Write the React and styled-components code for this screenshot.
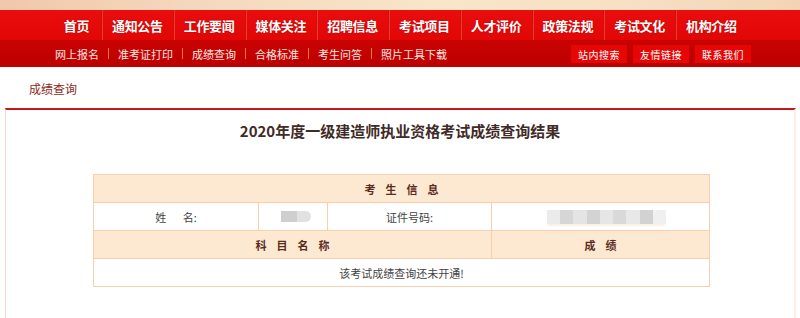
import React from "react";
import styled, { createGlobalStyle } from "styled-components";

const mainMenu = [
  "首页",
  "通知公告",
  "工作要闻",
  "媒体关注",
  "招聘信息",
  "考试项目",
  "人才评价",
  "政策法规",
  "考试文化",
  "机构介绍",
];
const subMenu = ["网上报名", "准考证打印", "成绩查询", "合格标准", "考生问答", "照片工具下载"];
const quickLinks = ["站内搜索", "友情链接", "联系我们"];
const idMosaic = ["#ebebeb", "#d6d6d6", "#e4e4e4", "#d3d3d3", "#e6e6e6", "#d9d9d9", "#e8e8e8", "#d2d2d2", "#f0f0f0"];

const GlobalStyle = createGlobalStyle`
  html, body {
    margin: 0;
    padding: 0;
    background: #ffffff;
    font-family: "Noto Sans CJK SC", "Liberation Sans", sans-serif;
  }
  #root {
    min-height: 318px;
  }
`;

const Page = styled.div`
  width: 800px;
  min-height: 318px;
  display: flex;
  flex-direction: column;
`;

const Banner = styled.div`
  height: 10px;
  background: linear-gradient(90deg, #f0c8ac 0%, #f5d8bc 25%, #f8e5ca 55%, #f7dfc2 80%, #f3d3b5 100%);
`;

const MainNav = styled.nav`
  height: 30px;
  display: flex;
  align-items: stretch;
  padding-left: 52px;
  background: linear-gradient(180deg, #e90d0d 0%, #e20707 100%);
`;

const MainItem = styled.a`
  width: ${(p) => (p.first ? "49px" : "70.75px")};
  display: flex;
  align-items: center;
  justify-content: center;
  border-right: ${(p) => (p.last ? "none" : "1px solid #cf1010")};
  box-shadow: ${(p) => (p.last ? "none" : "1px 0 0 #ef3a2a")};
  color: #ffffff;
  font-size: 13px;
  font-weight: 700;
  letter-spacing: -0.3px;
  text-shadow: 0 0 2px rgba(120, 0, 0, 0.45);
  cursor: pointer;
`;

const SubNav = styled.div`
  height: 27px;
  display: flex;
  align-items: center;
  justify-content: space-between;
  padding: 0 49px 0 55px;
  background: linear-gradient(180deg, #c90303 0%, #bd0000 100%);
`;

const SubLinks = styled.div`
  display: flex;
  align-items: center;
  gap: 9px;
`;

const SubLink = styled.a`
  color: #fbe6e0;
  font-size: 11px;
  cursor: pointer;
`;

const Divider = styled.span`
  width: 1px;
  height: 11px;
  background: #f07a2a;
`;

const Quick = styled.div`
  display: flex;
  gap: 6px;
  margin-top: 1px;
`;

const QuickButton = styled.a`
  width: 56px;
  height: 18px;
  display: flex;
  align-items: center;
  justify-content: center;
  background: #e50606;
  color: #ffffff;
  font-size: 10px;
  letter-spacing: 0.5px;
  cursor: pointer;
`;

const Crumb = styled.div`
  height: 41px;
  display: flex;
  align-items: center;
  padding: 2px 0 0 29px;
  box-sizing: border-box;
  color: #8c2a22;
  font-size: 12px;
`;

const Panel = styled.section`
  flex: 1;
  margin: 0 4px 0 5px;
  border-top: 2px solid #c8161a;
  border-left: 1px solid #f6dac7;
  border-right: 2px solid #fbefe6;
  padding-bottom: 30px;
`;

const Title = styled.h1`
  margin: 0;
  padding-top: 11px;
  line-height: 20px;
  text-align: center;
  font-size: 15px;
  font-weight: 600;
  color: #3f2b27;
`;

const Table = styled.table`
  width: 616px;
  margin: 33px 0 0 87px;
  border-collapse: collapse;
  table-layout: fixed;
  font-size: 11px;
  color: #444444;
`;

const Head = styled.td`
  height: 27px;
  padding: 0 0 0 10px;
  border: 1px solid #f7cfae;
  background: #fde8d1;
  text-align: center;
  font-weight: 700;
  color: #5a2c1e;
  letter-spacing: 10px;
`;

const Cell = styled.td`
  height: 27px;
  padding: 0;
  border: 1px solid #f7cfae;
  background: #ffffff;
  text-align: center;
`;

const NameBlur = styled.div`
  width: 30px;
  height: 11px;
  margin: 0 0 0 22px;
  display: flex;
  border-radius: 0 6px 6px 0;
  overflow: hidden;
`;

const BlurBlock = styled.span`
  flex: ${(p) => p.grow};
  background: ${(p) => p.tone};
`;

const IdBlur = styled.div`
  width: 119px;
  height: 14px;
  margin: 0 0 0 55px;
  display: flex;
  box-shadow: 0 3px 2px -1px #fbeee2;
`;

const App = () => {
  return (
    <Page>
      <GlobalStyle />
      <Banner />
      <MainNav>
        {mainMenu.map((item, i) => (
          <MainItem key={item} first={i === 0} last={i === mainMenu.length - 1}>
            {item}
          </MainItem>
        ))}
      </MainNav>
      <SubNav>
        <SubLinks>
          {subMenu.map((item, i) => (
            <React.Fragment key={item}>
              {i > 0 && <Divider />}
              <SubLink>{item}</SubLink>
            </React.Fragment>
          ))}
        </SubLinks>
        <Quick>
          {quickLinks.map((item) => (
            <QuickButton key={item}>{item}</QuickButton>
          ))}
        </Quick>
      </SubNav>
      <Crumb>成绩查询</Crumb>
      <Panel>
        <Title>2020年度一级建造师执业资格考试成绩查询结果</Title>
        <Table>
          <colgroup>
            <col style={{ width: 165 }} />
            <col style={{ width: 69 }} />
            <col style={{ width: 164 }} />
            <col style={{ width: 218 }} />
          </colgroup>
          <tbody>
            <tr>
              <Head colSpan={4}>考生信息</Head>
            </tr>
            <tr>
              <Cell>姓{"\u3000\u2002"}名:</Cell>
              <Cell>
                <NameBlur>
                  <BlurBlock grow={16} tone="#cfcfcf" />
                  <BlurBlock grow={14} tone="#e1e1e1" />
                </NameBlur>
              </Cell>
              <Cell>证件号码:</Cell>
              <Cell>
                <IdBlur>
                  {idMosaic.map((tone, i) => (
                    <BlurBlock key={i} grow={1} tone={tone} />
                  ))}
                </IdBlur>
              </Cell>
            </tr>
            <tr>
              <Head colSpan={3}>科目名称</Head>
              <Head>成绩</Head>
            </tr>
            <tr>
              <Cell colSpan={4}>该考试成绩查询还未开通!</Cell>
            </tr>
          </tbody>
        </Table>
      </Panel>
    </Page>
  );
};

export default App;
